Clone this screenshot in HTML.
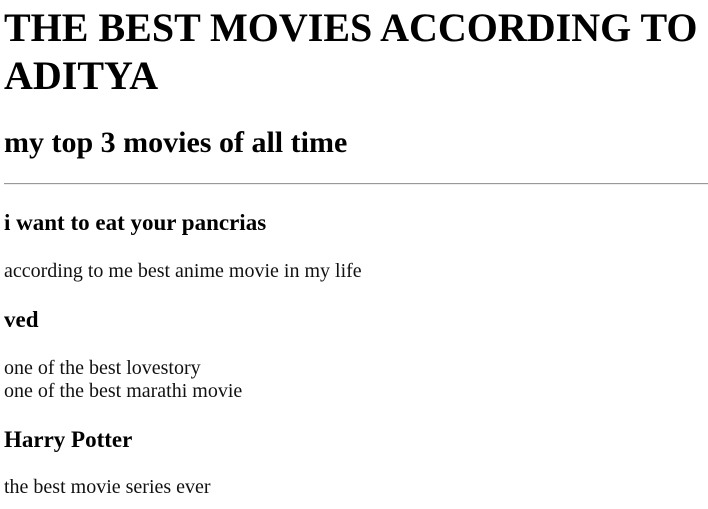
<!DOCTYPE html>
<html><head><meta charset="utf-8"><style>
html,body{margin:0;padding:0;background:#fff;width:708px;height:509px;overflow:hidden;}
body{font-family:"Liberation Serif",serif;color:#000;position:relative;}
div{position:absolute;left:4px;white-space:nowrap;}
.h1{font-size:40px;font-weight:bold;line-height:48px;top:4px;}
.h2{font-size:30px;font-weight:bold;line-height:36px;top:125px;}
.h3{font-size:23px;font-weight:bold;line-height:26px;}
.p{font-size:20px;line-height:23px;color:#111;}
hr{position:absolute;left:4px;top:183px;width:704px;margin:0;border:0;border-top:1px solid #999;border-bottom:1px solid #eee;height:0;}
</style></head><body>
<div class="h1">THE BEST MOVIES ACCORDING TO<br>ADITYA</div>
<div class="h2">my top 3 movies of all time</div>
<hr>
<div class="h3" style="top:210px">i want to eat your pancrias</div>
<div class="p" style="top:260px">according to me best anime movie in my life</div>
<div class="h3" style="top:307px">ved</div>
<div class="p" style="top:357px">one of the best lovestory<br>one of the best marathi movie</div>
<div class="h3" style="top:427px">Harry Potter</div>
<div class="p" style="top:476px">the best movie series ever</div>
</body></html>
